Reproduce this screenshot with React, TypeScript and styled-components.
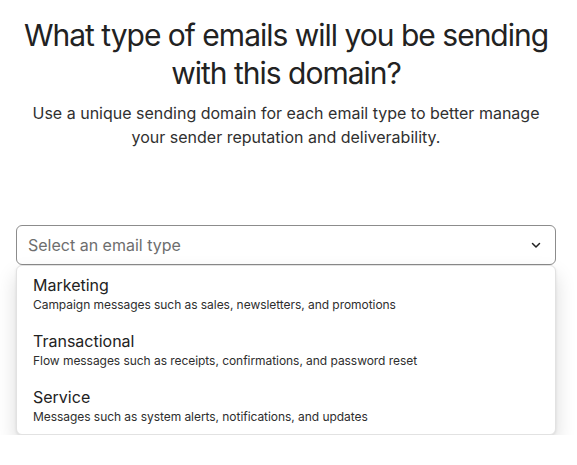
import React from "react";
import styled, { createGlobalStyle } from "styled-components";

const GlobalStyle = createGlobalStyle`
  body {
    margin: 0;
    background: #ffffff;
    font-family: Inter, "Noto Sans", sans-serif;
    color: #202020;
  }
`;

const Page = styled.main`
  width: 540px;
  margin-left: 16px;
  padding-top: 16px;
  display: flex;
  flex-direction: column;
`;

const Title = styled.h1`
  margin: 0 -10px;
  font-size: 30px;
  line-height: 38px;
  font-weight: 400;
  text-align: center;
  color: #222;
  letter-spacing: -1px;
`;

const Subtitle = styled.p`
  margin: 9px 0 0;
  font-size: 16px;
  line-height: 24px;
  text-align: center;
  color: #303030;
`;

const SelectWrap = styled.div`
  margin-top: 76px;
  position: relative;
`;

const Trigger = styled.button`
  box-sizing: border-box;
  width: 100%;
  height: 40px;
  display: flex;
  align-items: center;
  justify-content: space-between;
  padding: 0 13px 0 11px;
  border: 1px solid #8c8c8c;
  border-radius: 6px;
  background: #fff;
  font-family: inherit;
  font-size: 16px;
  color: #6e6e6e;
  cursor: pointer;
`;

const Menu = styled.ul`
  box-sizing: border-box;
  list-style: none;
  margin: 0;
  padding: 0;
  border: 1px solid #e2e2e2;
  border-radius: 6px;
  background: #fff;
  box-shadow: 0 10px 20px rgba(0, 0, 0, 0.15), 0 1px 3px rgba(0, 0, 0, 0.08);
`;

const Option = styled.li`
  padding: 8px 16px;
  display: flex;
  flex-direction: column;
  cursor: pointer;
`;

const OptionTitle = styled.span`
  font-size: 16px;
  line-height: 22px;
  color: #222;
`;

const OptionDesc = styled.span`
  font-size: 12px;
  line-height: 18px;
  color: #2e2e2e;
  letter-spacing: -0.05px;
`;

const options = [
  { title: "Marketing", desc: "Campaign messages such as sales, newsletters, and promotions" },
  { title: "Transactional", desc: "Flow messages such as receipts, confirmations, and password reset" },
  { title: "Service", desc: "Messages such as system alerts, notifications, and updates" },
];

const Chevron = () => (
  <svg width="12" height="12" viewBox="0 0 12 12" fill="none">
    <path d="M2.5 4.5 6 8l3.5-3.5" stroke="#222" strokeWidth="1.5" strokeLinecap="round" strokeLinejoin="round" />
  </svg>
);

export default function App() {
  return (
    <>
      <GlobalStyle />
      <Page>
        <Title>
          What type of emails will you be sending
          <br />
          with this domain?
        </Title>
        <Subtitle>
          Use a unique sending domain for each email type to better manage your sender reputation and deliverability.
        </Subtitle>
        <SelectWrap>
          <Trigger>
            <span>Select an email type</span>
            <Chevron />
          </Trigger>
          <Menu>
            {options.map((o) => (
              <Option key={o.title}>
                <OptionTitle>{o.title}</OptionTitle>
                <OptionDesc>{o.desc}</OptionDesc>
              </Option>
            ))}
          </Menu>
        </SelectWrap>
      </Page>
    </>
  );
}
